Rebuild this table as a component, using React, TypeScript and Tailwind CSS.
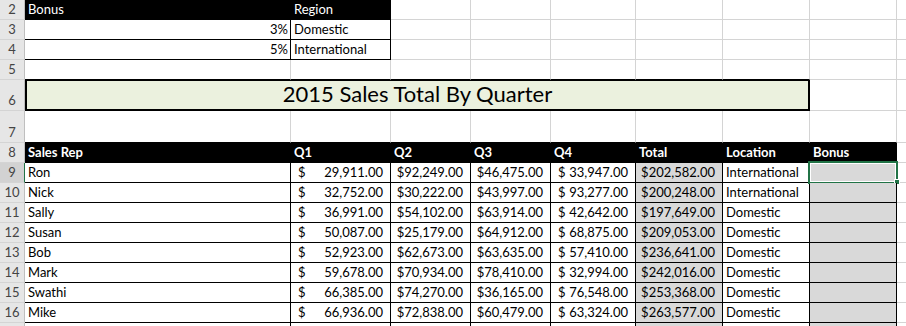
const W = ['w-[25px]', 'w-[266px]', 'w-[100px]', 'w-[80px]', 'w-[80px]', 'w-[85px]', 'w-[87px]', 'w-[87px]', 'w-[87px]', 'w-[87px]'];

type CellProps = {
  w: string;
  dark?: boolean; // black borders
  cls?: string;
  children?: React.ReactNode;
};

const Cell = ({ w, dark, cls = '', children }: CellProps) => (
  <div
    className={`${w} shrink-0 border-r border-b flex items-end pb-[2px] leading-4 overflow-hidden whitespace-nowrap ${
      dark ? 'border-black' : 'border-[#d4d4d4]'
    } ${cls}`}
  >
    {children}
  </div>
);

const RowHead = ({ n, sel }: { n?: number; sel?: boolean }) => (
  <div
    className={`w-[25px] shrink-0 border-r border-b border-b-[#d4d4d4] flex items-end justify-center pb-[2px] leading-4 text-[#444] ${
      sel ? 'bg-[#d2d2d2] border-r-[#217346]' : 'bg-[#e6e6e6] border-r-[#bfbfbf]'
    }`}
  >
    {n}
  </div>
);

const reps = [
  ['Ron', '29,911.00', '$92,249.00', '$46,475.00', '33,947.00', '$202,582.00', 'International'],
  ['Nick', '32,752.00', '$30,222.00', '$43,997.00', '93,277.00', '$200,248.00', 'International'],
  ['Sally', '36,991.00', '$54,102.00', '$63,914.00', '42,642.00', '$197,649.00', 'Domestic'],
  ['Susan', '50,087.00', '$25,179.00', '$64,912.00', '68,875.00', '$209,053.00', 'Domestic'],
  ['Bob', '52,923.00', '$62,673.00', '$63,635.00', '57,410.00', '$236,641.00', 'Domestic'],
  ['Mark', '59,678.00', '$70,934.00', '$78,410.00', '32,994.00', '$242,016.00', 'Domestic'],
  ['Swathi', '66,385.00', '$74,270.00', '$36,165.00', '76,548.00', '$253,368.00', 'Domestic'],
  ['Mike', '66,936.00', '$72,838.00', '$60,479.00', '63,324.00', '$263,577.00', 'Domestic'],
  ['', '', '', '', '', '', ''],
];

const headers = ['Sales Rep', 'Q1', 'Q2', 'Q3', 'Q4', 'Total', 'Location', 'Bonus'];

const Money = ({ v }: { v: string }) =>
  v ? (
    <div className="flex w-full justify-between px-[7px]">
      <span>$</span>
      <span>{v}</span>
    </div>
  ) : null;

export default function App() {
  return (
    <div className="w-[906px] h-[326px] overflow-hidden bg-white text-black text-[13px] font-['Lato',sans-serif]">
      {/* row 2 */}
      <div className="flex h-[20px]">
        <RowHead n={2} />
        <Cell w={W[1]} dark cls="bg-black text-white pl-[3px]">Bonus</Cell>
        <Cell w={W[2]} dark cls="bg-black text-white pl-[3px]">Region</Cell>
        {W.slice(3).map((w, i) => (
          <Cell key={i} w={w} />
        ))}
      </div>
      {/* rows 3-4 */}
      {[
        ['3%', 'Domestic'],
        ['5%', 'International'],
      ].map(([pct, region], r) => (
        <div key={r} className="flex h-[20px]">
          <RowHead n={r + 3} />
          <Cell w={W[1]} dark cls="justify-end pr-[2px]">{pct}</Cell>
          <Cell w={W[2]} dark cls="pl-[3px]">{region}</Cell>
          {W.slice(3).map((w, i) => (
            <Cell key={i} w={w} />
          ))}
        </div>
      ))}
      {/* row 5 */}
      <div className="flex h-[20px]">
        <RowHead n={5} />
        {W.slice(1).map((w, i) => (
          <Cell key={i} w={w} cls={i < 7 ? 'border-b-black' : ''} />
        ))}
      </div>
      {/* row 6 title */}
      <div className="flex h-[31px]">
        <RowHead n={6} />
        <div className="w-[785px] shrink-0 border-t border-l-2 border-r-2 border-b-2 border-black bg-[#ebf1de] flex items-end justify-center pb-[3px] text-[22px] leading-[24px]">
          2015 Sales Total By Quarter
        </div>
        <Cell w={W[8]} />
        <Cell w={W[9]} />
      </div>
      {/* row 7 */}
      <div className="flex h-[32px]">
        <RowHead n={7} />
        {W.slice(1).map((w, i) => (
          <Cell key={i} w={w} cls={i < 8 ? 'border-b-black' : ''} />
        ))}
      </div>
      {/* row 8 header */}
      <div className="flex h-[20px]">
        <RowHead n={8} />
        {headers.map((h, i) => (
          <Cell key={h} w={W[i + 1]} dark cls="bg-black text-white font-bold pl-[3px]">
            {h}
          </Cell>
        ))}
        <Cell w={W[9]} />
      </div>
      {/* data rows, last one is cut off by the window */}
      {reps.map((r, i) => (
        <div key={i} className="flex h-[20px]">
          <RowHead n={i < 8 ? i + 9 : undefined} sel={i === 0} />
          <Cell w={W[1]} dark cls="pl-[3px]">{r[0]}</Cell>
          <Cell w={W[2]} dark>
            <Money v={r[1]} />
          </Cell>
          <Cell w={W[3]} dark cls="justify-end pr-[7px]">{r[2]}</Cell>
          <Cell w={W[4]} dark cls="justify-end pr-[7px]">{r[3]}</Cell>
          <Cell w={W[5]} dark>
            <Money v={r[4]} />
          </Cell>
          <Cell w={W[6]} dark cls="bg-[#d9d9d9] justify-end pr-[7px]">{r[5]}</Cell>
          <Cell w={W[7]} dark cls="pl-[3px]">{r[6]}</Cell>
          <Cell w={W[8]} dark cls="bg-[#d9d9d9] relative overflow-visible">
            {i === 0 && (
              <>
                <div className="absolute -inset-[2px] border-2 border-[#217346] shadow-[inset_0_0_0_1px_white]" />
                <div className="absolute -right-[4px] -bottom-[3px] w-[6px] h-[6px] bg-[#217346] border border-white" />
              </>
            )}
          </Cell>
          <Cell w={W[9]} />
        </div>
      ))}
    </div>
  );
}
